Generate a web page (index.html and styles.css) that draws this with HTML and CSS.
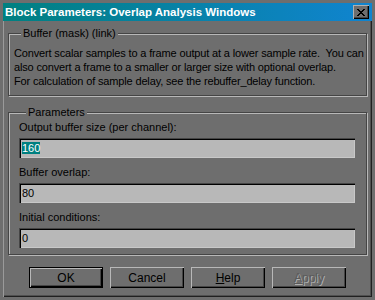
FILE: index.html
```html
<!DOCTYPE html>
<html lang="en">
<head>
  <meta charset="UTF-8">
  <title>Block Parameters: Overlap Analysis Windows</title>
<link rel="stylesheet" href="styles.css">
</head>
<body>

<div class="window">
  <div class="titlebar">
    <span class="title">Block Parameters: Overlap Analysis Windows</span>
    <div class="close_btn">
      <svg width="8" height="7" viewBox="0 0 8 7">
        <path d="M0 0h2v1h1v1h2v-1h1v-1h2v1h-1v1h-1v1h-1v1h1v1h1v1h1v1h-2v-1h-1v-1h-2v1h-1v1h-2v-1h1v-1h1v-1h1v-1h-1v-1h-1v-1h-1z" fill="#000"/>
      </svg>
    </div>
  </div>

  <div class="content">
    <fieldset class="group">
      <legend>Buffer (mask) (link)</legend>
      <p class="desc">Convert scalar samples to a frame output at a lower sample rate.&nbsp; You can<br>also convert a frame to a smaller or larger size with optional overlap.<br>For calculation of sample delay, see the rebuffer_delay function.</p>
    </fieldset>

    <fieldset class="group params">
      <legend>Parameters</legend>
      <div class="param_label">Output buffer size (per channel):</div>
      <div class="edit"><span class="selected">160</span></div>
      <div class="param_label">Buffer overlap:</div>
      <div class="edit">80</div>
      <div class="param_label">Initial conditions:</div>
      <div class="edit">0</div>
    </fieldset>

    <div class="buttons">
      <div class="btn default_btn">OK</div>
      <div class="btn">Cancel</div>
      <div class="btn"><u>H</u>elp</div>
      <div class="btn disabled"><u>A</u>pply</div>
    </div>
  </div>
</div>

</body>
</html>
```

FILE: styles.css
```css
*{
    padding: 0;
    margin: 0;
    box-sizing: border-box;
}
body{
    font-family: "Liberation Sans", Arial, sans-serif;
    font-size: 11px;
    background: #6e6e6e;
}
.window{
    width: 375px;
    height: 300px;
    background: #6e6e6e;
    border: 3px solid #6e6e6e;
    box-shadow: inset 1px 1px 0 #9a9a9a, inset -1px -1px 0 #202020, inset -2px -2px 0 #505050;
    display: flex;
    flex-direction: column;
}

/* title bar */
.titlebar{
    height: 18px;
    display: flex;
    align-items: center;
    justify-content: space-between;
    padding: 0 3px 0 2px;
    background: linear-gradient(to right, #008080, #1084d0);
}
.title{
    color: #ffffff;
    font-weight: bold;
    font-size: 11.5px;
}
.close_btn{
    width: 16px;
    height: 14px;
    display: flex;
    align-items: center;
    justify-content: center;
    background: #6e6e6e;
    box-shadow: inset 1px 1px 0 #b0b0b0, inset -1px -1px 0 #000000, inset -2px -2px 0 #454545;
}

.content{
    padding: 5px 5px 0 5px;
    display: flex;
    flex-direction: column;
}

/* group boxes */
.group{
    border: 1px solid #454545;
    box-shadow: inset 1px 1px 0 #b8b8b8, 1px 1px 0 #b8b8b8;
    padding: 0 0 7px 5px;
    color: #000;
}
.group legend{
    margin-left: 7px;
    padding: 0 2px;
    line-height: 14px;
    background: #6e6e6e;
}
.desc{
    margin-top: 6px;
    line-height: 14px;
    white-space: nowrap;
    letter-spacing: -0.15px;
}

.params{
    margin-top: 9px;
    padding: 0 11px 6px 10px;
}
.param_label{
    line-height: 14px;
    margin-top: 7px;
}
.param_label:first-of-type{
    margin-top: 1px;
}
.edit{
    height: 20px;
    margin-top: 4px;
    padding: 3px 0 0 3px;
    line-height: 14px;
    background: #b8b8b8;
    box-shadow: inset 1px 1px 0 #454545, inset 2px 2px 0 #000000, inset -1px -1px 0 #c8c8c8;
}
.selected{
    background: #008080;
    color: #ffffff;
}

/* buttons */
.buttons{
    display: flex;
    justify-content: center;
    gap: 7px;
    margin-top: 12px;
}
.btn{
    width: 74px;
    height: 21px;
    display: flex;
    align-items: center;
    justify-content: center;
    font-size: 12px;
    box-shadow: inset 1px 1px 0 #b8b8b8, inset -1px -1px 0 #000000, inset -2px -2px 0 #454545;
}
.default_btn{
    border: 1px solid #000000;
}
.disabled{
    color: #5a5a5a;
    text-shadow: 1px 1px 0 #b0b0b0;
}
```
